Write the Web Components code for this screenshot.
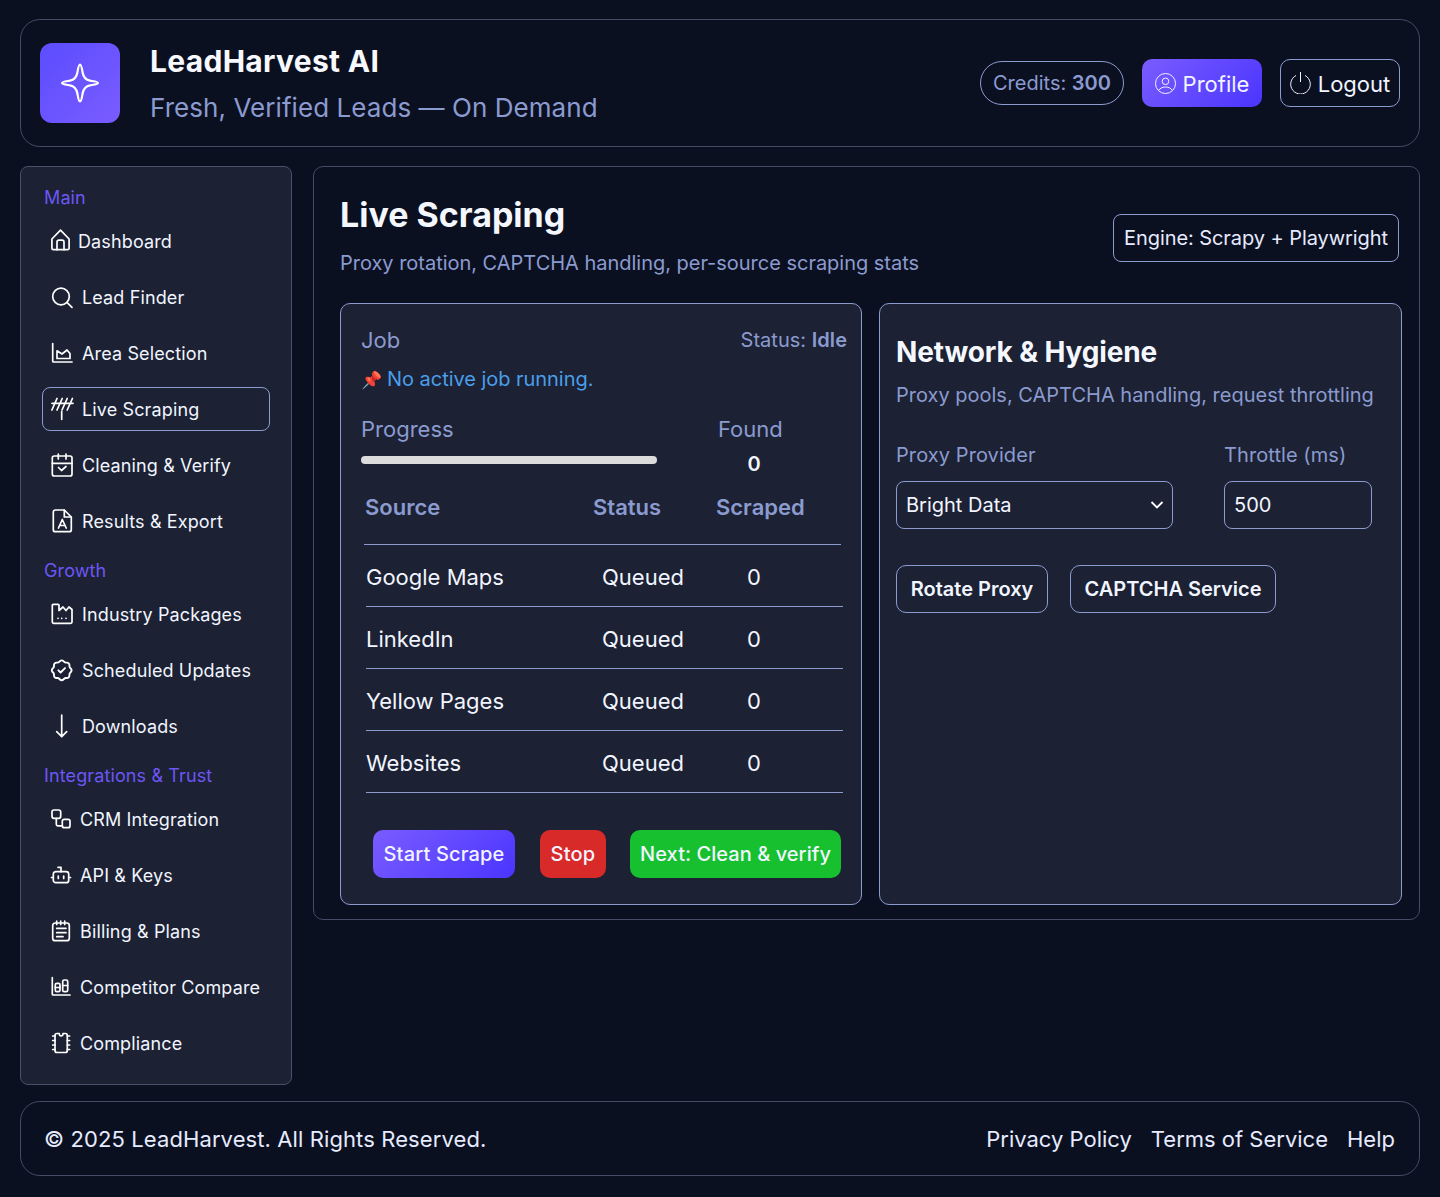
<!DOCTYPE html>
<html lang="en">
<head>
<meta charset="utf-8">
<title>LeadHarvest AI</title>
<style>
    html, body { margin: 0; background: #0b1020; }
    body {
        font-family: Inter, "Liberation Sans", sans-serif;
        color: #f1f5ff;
    }
</style>
</head>
<body>
<lead-app>
    <app-header slot="header"></app-header>
    <side-nav slot="nav">
        <nav-label>Main</nav-label>
        <nav-item icon="home" size="18">Dashboard</nav-item>
        <nav-item icon="search">Lead Finder</nav-item>
        <nav-item icon="area">Area Selection</nav-item>
        <nav-item icon="antenna" active>Live Scraping</nav-item>
        <nav-item icon="calendar">Cleaning &amp; Verify</nav-item>
        <nav-item icon="file">Results &amp; Export</nav-item>
        <nav-label>Growth</nav-label>
        <nav-item icon="factory">Industry Packages</nav-item>
        <nav-item icon="rosette">Scheduled Updates</nav-item>
        <nav-item icon="down">Downloads</nav-item>
        <nav-label>Integrations &amp; Trust</nav-label>
        <nav-item icon="schema" size="20">CRM Integration</nav-item>
        <nav-item icon="robot" size="20">API &amp; Keys</nav-item>
        <nav-item icon="notes" size="20">Billing &amp; Plans</nav-item>
        <nav-item icon="bars" size="20">Competitor Compare</nav-item>
        <nav-item icon="cpu" size="20">Compliance</nav-item>
    </side-nav>
    <scrape-page slot="main">
        <job-card></job-card>
        <network-card></network-card>
    </scrape-page>
    <app-footer slot="footer"></app-footer>
</lead-app>

<script>
// icon paths are drawn in the px box of the nav row (width = size, height = 24)
const ICONS = {
    home: '<path d="M9.500 1.200L.9 10v9.200a1.500 1.500 0 0 0 1.500 1.500h14.200a1.500 1.500 0 0 0 1.500-1.500V10z"/><path d="M6 20.700v-7.500a2 2 0 0 1 2-2h3a2 2 0 0 1 2 2v7.500"/>',
    search: '<circle cx="10" cy="11.500" r="8.300"/><path d="M16.200 17.700L21 22.300"/>',
    area: '<path d="M1.700 2.500V20a1 1 0 0 0 1 1H21"/><path d="M6 17.500V9.800l5 3.200 5-4 3 3.500v5z"/>',
    antenna: '<path d="M.9 13L6 1.500M6 13l5.200-11.500M11 13l5.200-11.500M16.200 13l5.200-11.500M1 6.300h21M10.700 14.500v7.800"/>',
    calendar: '<rect x="1.300" y="3" width="19.700" height="20" rx="2"/><path d="M7.300 1v5M15 1v5M1.300 10.300H21M7.500 14.500l3 3 4.500-4"/>',
    file: '<path d="M13.300 1h-9a2 2 0 0 0-2 2v17.700a2 2 0 0 0 2 2h14a2 2 0 0 0 2-2V8z"/><path d="M13.300 1v7h7M7.500 19l3.800-8.500 3.900 8.500M8.800 16.500h5"/>',
    factory: '<path d="M1.300 20V3.300a1 1 0 0 1 1-1H7a1 1 0 0 1 1 1v5.200l4-3.500 3 3.500 3-3.500 3 2.500V20a1.300 1.300 0 0 1-1.300 1.300H2.600A1.300 1.300 0 0 1 1.300 20z"/><path d="M7 16.300h.01M10.700 16.300h.01M15 16.300h.01"/>',
    rosette: '<g transform="translate(10.700 12.300) scale(1.100) translate(-12 -12)"><path d="M5 7.200A2.200 2.200 0 0 1 7.200 5h1a2.200 2.200 0 0 0 1.550-.64l.7-.7a2.200 2.200 0 0 1 3.120 0l.7.7c.41.41.97.64 1.550.64h1a2.200 2.200 0 0 1 2.200 2.200v1c0 .58.23 1.140.64 1.550l.7.7a2.200 2.200 0 0 1 0 3.120l-.7.7a2.200 2.200 0 0 0-.64 1.550v1a2.200 2.200 0 0 1-2.200 2.200h-1a2.200 2.200 0 0 0-1.550.64l-.7.7a2.200 2.200 0 0 1-3.120 0l-.7-.7a2.200 2.200 0 0 0-1.550-.64h-1A2.200 2.200 0 0 1 5 16.800v-1a2.200 2.200 0 0 0-.64-1.550l-.7-.7a2.200 2.200 0 0 1 0-3.120l.7-.7A2.200 2.200 0 0 0 5 8.200z"/><path d="M9 12l2 2 4-4"/></g>',
    down: '<path d="M10.700 1v21.700M5.700 17.700l5 5 5-5"/>',
    schema: '<rect x="1" y="3" width="8.700" height="8.300" rx="2"/><rect x="11.300" y="12.300" width="7.700" height="8.400" rx="2"/><path d="M5.300 11.300v6a1.500 1.500 0 0 0 1.500 1.500h4.500"/>',
    robot: '<rect x="2.300" y="8.700" width="15.400" height="11" rx="2.500"/><path d="M10 8.700V4.300H7M.5 14.500h1.800M17.700 14.500h1.800M7.300 13v2.500M12.700 13v2.500"/>',
    notes: '<rect x="1.700" y="4" width="16.600" height="17.700" rx="2.500"/><path d="M5.700 2v3.500M9.700 2v3.500M13.700 2v3.500M5.700 9.300H15M5.700 13.700H15M5.700 17.700H12"/>',
    bars: '<path d="M1.300 2.700V19a1 1 0 0 0 1 1H19"/><rect x="4.300" y="8.300" width="4.700" height="8.400" rx="1.500"/><rect x="11.700" y="5" width="5" height="11.700" rx="1.500"/><path d="M4.300 12.500H9M11.700 10.500h5"/>',
    cpu: '<path d="M4 4.500a2 2 0 0 1 2-2h2.300v.8a1.500 1.500 0 0 0 1.500 1.500h.7a1.500 1.500 0 0 0 1.500-1.500v-.8h2.300a2 2 0 0 1 2 2v15a2 2 0 0 1-2 2H6a2 2 0 0 1-2-2z"/><path d="M1.700 5H4M1.700 9.500H4M1.700 14H4M1.700 18.500H4M16.300 5h2.300M16.300 9.500h2.300M16.300 14h2.300M16.300 18.500h2.300"/>'
};

// small helper, every element below just sets its shadow html
class BaseElement extends HTMLElement {
    constructor() {
        super();
        this.root = this.attachShadow({ mode: "open" });
    }
    render(html) {
        this.root.innerHTML = html;
    }
}

class LeadApp extends BaseElement {
    connectedCallback() {
        this.render(`
        <style>
            :host { display: block; padding: 19px 20px 21px; }
            .columns {
                display: grid;
                grid-template-columns: 272px 1107px;
                column-gap: 21px;
                align-items: start;
                margin: 19px 0 16px;
            }
        </style>
        <slot name="header"></slot>
        <div class="columns">
            <slot name="nav"></slot>
            <slot name="main"></slot>
        </div>
        <slot name="footer"></slot>`);
    }
}

class AppHeader extends BaseElement {
    connectedCallback() {
        this.render(`
        <style>
            :host {
                display: flex;
                align-items: center;
                height: 128px;
                box-sizing: border-box;
                padding: 0 19px;
                border: 1px solid #444b63;
                border-radius: 20px;
            }
            .logo {
                width: 80px;
                height: 80px;
                border-radius: 12px;
                background: linear-gradient(135deg, #5b4dff, #7a5cff);
                display: flex;
                align-items: center;
                justify-content: center;
                margin-right: 30px;
            }
            .brand { flex: 1; }
            h1 { margin: 0 0 13px; font-size: 30px; line-height: 36px; font-weight: 700; color: #f8f9ff; letter-spacing: 0.3px; }
            p { margin: 0; font-size: 26px; line-height: 32px; color: #8b9bd0; letter-spacing: 0.06px; }
            .actions { display: flex; align-items: center; }
            .credits {
                box-sizing: border-box;
                height: 44px;
                width: 144px;
                border: 1px solid #8b9bd0;
                border-radius: 22px;
                font-size: 20px;
                line-height: 42px;
                text-align: center;
                color: #8b9bd0;
                margin-right: 18px;
            }
            .credits b { font-weight: 600; }
            .btn {
                box-sizing: border-box;
                display: flex;
                align-items: center;
                justify-content: center;
                gap: 7px;
                width: 120px;
                height: 48px;
                border-radius: 10px;
                font-size: 22px;
                color: #f1f5ff;
            }
            .btn span { padding-top: 1px; }
            .profile { background: linear-gradient(135deg, #7a5cff, #4a35ff); margin-right: 18px; }
            .logout { border: 1px solid #8b9bd0; }
            svg { display: block; }
        </style>
        <div class="logo">
            <svg width="42" height="42" viewBox="0 0 42 42" fill="none" stroke="#fff" stroke-width="2.200" stroke-linejoin="round">
                <path d="M21 2.500c1.400 0 1.900 4 2.600 8 .9 5 2.900 7.400 7.400 8.200 3.600.6 8 1 8 2.300s-4.400 1.700-8 2.300c-4.500.8-6.500 3.200-7.400 8.200-.7 4-1.200 8-2.600 8s-1.900-4-2.600-8c-.9-5-2.900-7.400-7.400-8.200-3.600-.6-8-1-8-2.300s4.400-1.700 8-2.300c4.500-.8 6.500-3.200 7.400-8.200.7-4 1.200-8 2.600-8z"/>
            </svg>
        </div>
        <div class="brand">
            <h1>LeadHarvest AI</h1>
            <p>Fresh, Verified Leads — On Demand</p>
        </div>
        <div class="actions">
            <div class="credits">Credits: <b>300</b></div>
            <div class="btn profile">
                <svg width="21" height="21" viewBox="0 0 21 21" fill="none" stroke="#f1f5ff" stroke-width="1">
                    <circle cx="10.500" cy="10.500" r="10"/><circle cx="10.500" cy="8.300" r="3.300"/>
                    <path d="M3.500 17.500c1.500-2.300 4-3.500 7-3.500s5.500 1.200 7 3.500"/>
                </svg>
                <span>Profile</span>
            </div>
            <div class="btn logout">
                <svg width="21" height="22" viewBox="0 0 21 22" fill="none" stroke="#f1f5ff" stroke-width="1">
                    <path d="M6 3.500a9.800 9.800 0 1 0 9 0"/><path d="M10.500 0v10"/>
                </svg>
                <span>Logout</span>
            </div>
        </div>`);
    }
}

class SideNav extends BaseElement {
    connectedCallback() {
        this.render(`
        <style>
            :host {
                display: flex;
                flex-direction: column;
                gap: 12px;
                box-sizing: border-box;
                height: 919px;
                padding: 15px 21px 0;
                background: #1c2133;
                border: 1px solid #4a5068;
                border-radius: 8px;
            }
        </style>
        <slot></slot>`);
    }
}

class NavLabel extends BaseElement {
    connectedCallback() {
        this.render(`
        <style>
            :host {
                display: block;
                height: 25px;
                margin-left: 2px;
                padding-top: 4px;
                box-sizing: border-box;
                font-size: 18px;
                line-height: 24px;
                letter-spacing: 0.12px;
                color: #6c57f5;
            }
        </style>
        <slot></slot>`);
    }
}

class NavItem extends BaseElement {
    connectedCallback() {
        const size = this.getAttribute("size") || 22;
        const icon = ICONS[this.getAttribute("icon")] || "";
        this.render(`
        <style>
            :host {
                display: flex;
                align-items: center;
                gap: 9px;
                box-sizing: border-box;
                height: 44px;
                padding-left: 8px;
                border: 1px solid transparent;
                border-radius: 8px;
                font-size: 18px;
                letter-spacing: 0.13px;
                color: #f1f5ff;
            }
            :host([active]) { border-color: #8b9bd0; }
            svg { flex: none; display: block; overflow: visible; }
        </style>
        <svg width="${size}" height="24" viewBox="0 0 ${size} 24" fill="none" stroke="#fff" stroke-width="1.700" stroke-linecap="round" stroke-linejoin="round">${icon}</svg>
        <slot></slot>`);
    }
}

class UiButton extends BaseElement {
    connectedCallback() {
        this.render(`
        <style>
            :host {
                display: inline-flex;
                align-items: center;
                justify-content: center;
                box-sizing: border-box;
                height: 48px;
                border-radius: 10px;
                font-size: 20px;
                font-weight: 500;
                color: #f1f5ff;
            }
            :host([kind="primary"]) { background: linear-gradient(135deg, #7a5cff, #4a35ff); }
            :host([kind="danger"]) { background: #d92a2a; }
            :host([kind="success"]) { background: #16c02e; }
            :host([kind="outline"]) { border: 1px solid #8b9bd0; font-weight: 600; }
        </style>
        <slot></slot>`);
    }
}

class ScrapePage extends BaseElement {
    connectedCallback() {
        this.render(`
        <style>
            :host {
                display: block;
                box-sizing: border-box;
                height: 754px;
                padding: 26px 17px 0 26px;
                border: 1px solid #444b63;
                border-radius: 10px;
            }
            .top {
                display: flex;
                justify-content: space-between;
                align-items: flex-start;
                height: 110px;
                padding-right: 3px;
            }
            h2 { margin: 0 0 14px; font-size: 34px; line-height: 44px; font-weight: 700; color: #f5f7ff; }
            p { margin: 0; font-size: 20px; line-height: 24px; color: #8b9bd0; letter-spacing: -0.02px; }
            .engine {
                box-sizing: border-box;
                margin-top: 21px;
                height: 48px;
                padding: 0 10px;
                border: 1px solid #8b9bd0;
                border-radius: 8px;
                font-size: 20px;
                line-height: 46px;
                letter-spacing: -0.07px;
                color: #e6ebff;
            }
            .cards { display: grid; grid-template-columns: 522px 523px; column-gap: 17px; }
        </style>
        <div class="top">
            <div>
                <h2>Live Scraping</h2>
                <p>Proxy rotation, CAPTCHA handling, per-source scraping stats</p>
            </div>
            <div class="engine">Engine: Scrapy + Playwright</div>
        </div>
        <div class="cards"><slot></slot></div>`);
    }
}

class JobCard extends BaseElement {
    connectedCallback() {
        const rows = [
            ["Google Maps", "Queued", "0"],
            ["LinkedIn", "Queued", "0"],
            ["Yellow Pages", "Queued", "0"],
            ["Websites", "Queued", "0"]
        ].map(r => `<div class="row"><span>${r[0]}</span><span>${r[1]}</span><span class="n">${r[2]}</span></div>`).join("");
        this.render(`
        <style>
            :host {
                display: block;
                box-sizing: border-box;
                height: 602px;
                padding: 19px 14px 0 20px;
                background: #1c2133;
                border: 1px solid #8b9bd0;
                border-radius: 10px;
            }
            .head { display: flex; justify-content: space-between; align-items: center; height: 34px; color: #8b9bd0; font-size: 22px; }
            .state { font-size: 20px; letter-spacing: 0.03px; }
            .state b { font-weight: 600; }
            .note { margin-top: 5px; height: 34px; line-height: 34px; font-size: 20px; color: #4a9eea; letter-spacing: -0.04px; }
            .pin { display: inline-block; width: 26px; font-size: 17px; }
            .progress {
                display: grid;
                grid-template-columns: 357px auto;
                margin-top: 17px;
                color: #8b9bd0;
                font-size: 22px;
                line-height: 32px;
            }
            .bar { width: 296px; height: 8px; margin-top: 11px; border-radius: 4px; background: #dcdcdc; }
            .found { width: 72px; margin-top: 3px; text-align: center; font-size: 20px; font-weight: 600; color: #f1f5ff; line-height: 32px; }
            .thead {
                display: grid;
                grid-template-columns: 228px 123px auto;
                align-items: center;
                box-sizing: border-box;
                width: 477px;
                height: 65px;
                margin-left: 3px;
                padding: 0 0 11px 1px;
                border-bottom: 1px solid #8b9bd0;
                font-size: 22px;
                font-weight: 600;
                color: #8b9bd0;
            }
            .row {
                display: grid;
                grid-template-columns: 236px 145px auto;
                align-items: center;
                box-sizing: border-box;
                width: 477px;
                height: 62px;
                margin-left: 5px;
                padding-top: 2px;
                border-bottom: 1px solid #8b9bd0;
                font-size: 22px;
                color: #f1f5ff;
            }
            .actions { display: flex; gap: 24px; margin: 37px 0 0 12px; }
            .start { width: 142px; letter-spacing: 0.17px; margin-right: 1px; }
            .stop { width: 66px; letter-spacing: 0.2px; }
            .next { width: 211px; letter-spacing: 0.05px; }
        </style>
        <div class="head"><span>Job</span><span class="state">Status: <b>Idle</b></span></div>
        <div class="note"><span class="pin">📌</span>No active job running.</div>
        <div class="progress">
            <div>Progress<div class="bar"></div></div>
            <div>Found<div class="found">0</div></div>
        </div>
        <div class="thead"><span>Source</span><span>Status</span><span>Scraped</span></div>
        ${rows}
        <div class="actions">
            <ui-button class="start" kind="primary">Start Scrape</ui-button>
            <ui-button class="stop" kind="danger">Stop</ui-button>
            <ui-button class="next" kind="success">Next: Clean &amp; verify</ui-button>
        </div>`);
    }
}

class NetworkCard extends BaseElement {
    connectedCallback() {
        this.render(`
        <style>
            :host {
                display: block;
                box-sizing: border-box;
                height: 602px;
                padding: 28px 16px 0 16px;
                background: #1c2133;
                border: 1px solid #8b9bd0;
                border-radius: 10px;
            }
            h3 { margin: 0 0 9px; font-size: 28px; line-height: 40px; font-weight: 700; color: #f5f7ff; letter-spacing: -0.12px; }
            p { margin: 0; font-size: 20px; line-height: 28px; color: #8b9bd0; }
            .fields { display: grid; grid-template-columns: 277px 148px; column-gap: 51px; margin-top: 31px; }
            label { display: block; height: 41px; font-size: 20px; line-height: 30px; color: #8b9bd0; letter-spacing: 0.08px; }
            .control {
                display: flex;
                align-items: center;
                justify-content: space-between;
                box-sizing: border-box;
                height: 48px;
                padding: 0 9px;
                border: 1px solid #8b9bd0;
                border-radius: 8px;
                font-size: 20px;
                color: #f1f5ff;
            }
            .control svg { margin-right: -1px; margin-left: auto; }
            .actions { display: flex; gap: 22px; margin-top: 36px; }
            .rotate { width: 152px; }
            .captcha { width: 206px; }
        </style>
        <h3>Network &amp; Hygiene</h3>
        <p>Proxy pools, CAPTCHA handling, request throttling</p>
        <div class="fields">
            <div>
                <label>Proxy Provider</label>
                <div class="control">Bright Data
                    <svg width="14" height="14" viewBox="0 0 14 14" fill="none" stroke="#fff" stroke-width="1.800"><path d="M1.500 4l5.500 5.500L12.500 4"/></svg>
                </div>
            </div>
            <div>
                <label>Throttle (ms)</label>
                <div class="control">500</div>
            </div>
        </div>
        <div class="actions">
            <ui-button class="rotate" kind="outline">Rotate Proxy</ui-button>
            <ui-button class="captcha" kind="outline">CAPTCHA Service</ui-button>
        </div>`);
    }
}

class AppFooter extends BaseElement {
    connectedCallback() {
        this.render(`
        <style>
            :host {
                display: flex;
                justify-content: space-between;
                align-items: center;
                box-sizing: border-box;
                height: 75px;
                padding: 0 24px 0 23px;
                border: 1px solid #444b63;
                border-radius: 20px;
                font-size: 22px;
                color: #e6ebff;
            }
            .copy { letter-spacing: 0.1px; }
            nav { display: flex; gap: 19px; }
        </style>
        <span class="copy">© 2025 LeadHarvest. All Rights Reserved.</span>
        <nav><span>Privacy Policy</span><span>Terms of Service</span><span>Help</span></nav>`);
    }
}

customElements.define("lead-app", LeadApp);
customElements.define("app-header", AppHeader);
customElements.define("side-nav", SideNav);
customElements.define("nav-label", NavLabel);
customElements.define("nav-item", NavItem);
customElements.define("ui-button", UiButton);
customElements.define("scrape-page", ScrapePage);
customElements.define("job-card", JobCard);
customElements.define("network-card", NetworkCard);
customElements.define("app-footer", AppFooter);
</script>
</body>
</html>
